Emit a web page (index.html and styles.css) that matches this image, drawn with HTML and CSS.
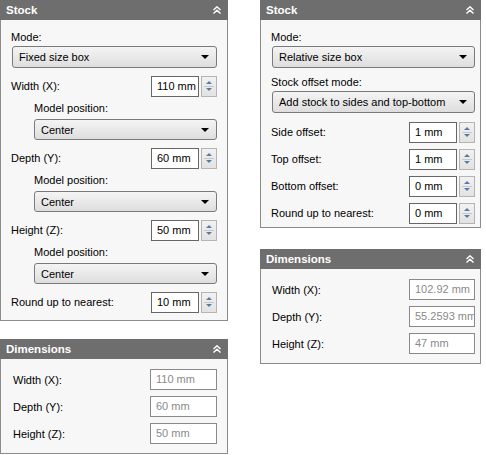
FILE: index.html
```html
<!DOCTYPE html>
<html>
<head>
<meta charset="utf-8">
<link rel="stylesheet" href="styles.css">
</head>
<body>
<div class="page">
  <div class="col col-left">
    <div class="panel">
      <div class="head"><span>Stock</span>
        <svg class="chev" width="8" height="8" viewBox="0 0 8 8"><path d="M0.5 4 L4 0.8 L7.5 4 M0.5 7.5 L4 4.3 L7.5 7.5" fill="none" stroke="#fff" stroke-width="1.4"/></svg>
      </div>
      <div class="body stock-left">
        <div class="lbl">Mode:</div>
        <div class="select"><span>Fixed size box</span><i class="arrow"></i></div>

        <div class="row"><span>Width (X):</span><div class="num"><div class="inp">110 mm</div><div class="spin"><i class="up"></i><i class="dn"></i></div></div></div>
        <div class="sub lbl">Model position:</div>
        <div class="sub select"><span>Center</span><i class="arrow"></i></div>

        <div class="row"><span>Depth (Y):</span><div class="num"><div class="inp">60 mm</div><div class="spin"><i class="up"></i><i class="dn"></i></div></div></div>
        <div class="sub lbl">Model position:</div>
        <div class="sub select"><span>Center</span><i class="arrow"></i></div>

        <div class="row"><span>Height (Z):</span><div class="num"><div class="inp">50 mm</div><div class="spin"><i class="up"></i><i class="dn"></i></div></div></div>
        <div class="sub lbl">Model position:</div>
        <div class="sub select"><span>Center</span><i class="arrow"></i></div>

        <div class="row"><span>Round up to nearest:</span><div class="num"><div class="inp">10 mm</div><div class="spin"><i class="up"></i><i class="dn"></i></div></div></div>
      </div>
    </div>

    <div class="panel dims dims-left">
      <div class="head"><span>Dimensions</span>
        <svg class="chev" width="8" height="8" viewBox="0 0 8 8"><path d="M0.5 4 L4 0.8 L7.5 4 M0.5 7.5 L4 4.3 L7.5 7.5" fill="none" stroke="#fff" stroke-width="1.4"/></svg>
      </div>
      <div class="body">
        <div class="drow"><span>Width (X):</span><div class="ro">110 mm</div></div>
        <div class="drow"><span>Depth (Y):</span><div class="ro">60 mm</div></div>
        <div class="drow"><span>Height (Z):</span><div class="ro">50 mm</div></div>
      </div>
    </div>
  </div>

  <div class="col col-right">
    <div class="panel">
      <div class="head"><span>Stock</span>
        <svg class="chev" width="8" height="8" viewBox="0 0 8 8"><path d="M0.5 4 L4 0.8 L7.5 4 M0.5 7.5 L4 4.3 L7.5 7.5" fill="none" stroke="#fff" stroke-width="1.4"/></svg>
      </div>
      <div class="body stock-right">
        <div class="lbl">Mode:</div>
        <div class="select"><span>Relative size box</span><i class="arrow"></i></div>
        <div class="lbl lbl2">Stock offset mode:</div>
        <div class="select"><span>Add stock to sides and top-bottom</span><i class="arrow"></i></div>
        <div class="rows">
          <div class="row"><span>Side offset:</span><div class="num"><div class="inp">1 mm</div><div class="spin"><i class="up"></i><i class="dn"></i></div></div></div>
          <div class="row"><span>Top offset:</span><div class="num"><div class="inp">1 mm</div><div class="spin"><i class="up"></i><i class="dn"></i></div></div></div>
          <div class="row"><span>Bottom offset:</span><div class="num"><div class="inp">0 mm</div><div class="spin"><i class="up"></i><i class="dn"></i></div></div></div>
          <div class="row"><span>Round up to nearest:</span><div class="num"><div class="inp">0 mm</div><div class="spin"><i class="up"></i><i class="dn"></i></div></div></div>
        </div>
      </div>
    </div>

    <div class="panel dims dims-right">
      <div class="head"><span>Dimensions</span>
        <svg class="chev" width="8" height="8" viewBox="0 0 8 8"><path d="M0.5 4 L4 0.8 L7.5 4 M0.5 7.5 L4 4.3 L7.5 7.5" fill="none" stroke="#fff" stroke-width="1.4"/></svg>
      </div>
      <div class="body">
        <div class="drow"><span>Width (X):</span><div class="ro">102.92 mm</div></div>
        <div class="drow"><span>Depth (Y):</span><div class="ro">55.2593 mm</div></div>
        <div class="drow"><span>Height (Z):</span><div class="ro">47 mm</div></div>
      </div>
    </div>
  </div>
</div>
</body>
</html>
```

FILE: styles.css
```css
* { box-sizing: border-box; }
html, body { margin: 0; padding: 0; background: #fff; }
body {
  font-family: "Liberation Sans", Arial, sans-serif;
  font-size: 11px;
  color: #000;
  width: 486px;
  height: 455px;
  overflow: hidden;
}
.page {
  display: flex;
  gap: 32px;
  align-items: flex-start;
}
.col { display: flex; flex-direction: column; }
.col-left { width: 228px; }
.col-right { width: 221px; }

.panel {
  display: flex;
  flex-direction: column;
}
.head {
  height: 20px;
  background: #6e6e6e;
  color: #fff;
  font-weight: bold;
  font-size: 11.5px;
  display: flex;
  align-items: center;
  justify-content: space-between;
  padding: 0 7px 0 6px;
}
.chev { display: block; margin-top: 0px; }
.body {
  background: #f7f7f7;
  border: 1px solid #8c8c8c;
  border-top: none;
}

/* Stock left */
.stock-left {
  height: 301px;
  padding: 9px 10px 0 10px;
}
.lbl {
  height: 16px;
  line-height: 16px;
  margin-bottom: 1px;
}
.select {
  height: 22px;
  border: 1px solid #7a7a7a;
  border-radius: 3px;
  background: linear-gradient(#f4f4f4, #dedede);
  display: flex;
  align-items: center;
  justify-content: space-between;
  padding: 0 7px 0 6px;
  margin-left: 1px;
}
.arrow {
  display: block;
  width: 0; height: 0;
  border-left: 4px solid transparent;
  border-right: 4px solid transparent;
  border-top: 4px solid #000;
}
.row {
  height: 22px;
  display: flex;
  align-items: center;
  justify-content: space-between;
  margin-top: 7px;
}
.sub.lbl { margin-left: 23px; margin-top: 3px; margin-bottom: 3px; }
.sub.select { margin-left: 23px; height: 21px; }
.num { display: flex; gap: 2px; align-items: center; }
.inp {
  width: 48px;
  height: 21px;
  border: 1px solid #666;
  background: #fff;
  padding: 0 0 0 5px;
  line-height: 18px;
}
.spin {
  width: 16px;
  height: 21px;
  border: 1px solid #b4b4b4;
  background: linear-gradient(#f2f2f2, #e2e2e2);
  display: flex;
  flex-direction: column;
  align-items: center;
  justify-content: space-around;
  padding: 3px 0;
  position: relative;
}
.spin::after {
  content: "";
  position: absolute;
  left: 2px; right: 2px; top: 9px;
  height: 1px;
  background: #c8c8c8;
}
.spin .up, .spin .dn {
  display: block;
  width: 0; height: 0;
  border-left: 3px solid transparent;
  border-right: 3px solid transparent;
}
.spin .up { border-bottom: 3px solid #5a7aa6; }
.spin .dn { border-top: 3px solid #5a7aa6; }

/* Stock right */
.stock-right {
  height: 208px;
  padding: 9px 5px 0 10px;
}
.lbl2 { margin-top: 6px; margin-bottom: 1px; }
.rows { margin-top: 8px; display: flex; flex-direction: column; gap: 5px; }
.rows .row { margin-top: 0; }

/* Dimensions */
.dims-left { margin-top: 18px; }
.dims-right { margin-top: 21px; }
.dims .body {
  padding: 10px 10px 9px 12px;
  display: flex;
  flex-direction: column;
  gap: 6px;
}
.dims-right .body { padding: 10px 5px 9px 11px; }
.drow {
  height: 21px;
  display: flex;
  align-items: center;
  justify-content: space-between;
}
.ro {
  width: 67px;
  height: 21px;
  border: 1px solid #8a8a8a;
  background: #fff;
  color: #8a8a8a;
  padding-left: 5px;
  line-height: 18px;
  white-space: nowrap;
  overflow: hidden;
}
.dims-right .ro { width: 66px; }
```
